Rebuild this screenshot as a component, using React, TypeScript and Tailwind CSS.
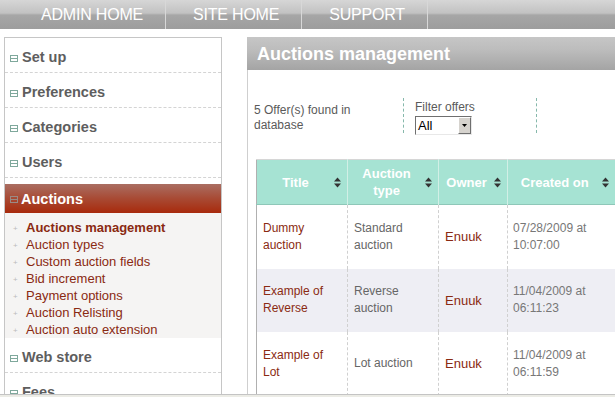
import { ReactNode } from 'react';

const font = { fontFamily: '"Liberation Sans", Arial, sans-serif' };

function MenuIcon(props: { active?: boolean }) {
  const c = props.active ? '#9a8a86' : '#7fa89c';
  return (
    <svg width="8" height="7" viewBox="0 0 8 7" className="shrink-0 mt-[6px]">
      <rect x="0.5" y="0.5" width="7" height="6" fill="none" stroke={c} />
      <line x1="0.5" y1="3.5" x2="7.5" y2="3.5" stroke={c} />
    </svg>
  );
}

function SortIcon() {
  return (
    <svg width="7" height="11" viewBox="0 0 7 11" className="shrink-0">
      <path d="M0 4.5 L3.5 0.5 L7 4.5 Z" fill="#333" />
      <path d="M0 6.5 L3.5 10.5 L7 6.5 Z" fill="#333" />
    </svg>
  );
}

function MenuItem(props: { label: string }) {
  return (
    <div className="h-[35px] border-b border-dashed border-[#d4d4d4] flex items-start gap-[4px] pl-[5px] pt-[11px]">
      <MenuIcon />
      <span className="text-[14.5px] leading-[18px] font-bold text-[#5e5e5e] -mt-[1px]">{props.label}</span>
    </div>
  );
}

const subItems = [
  'Auctions management',
  'Auction types',
  'Custom auction fields',
  'Bid increment',
  'Payment options',
  'Auction Relisting',
  'Auction auto extension',
];

function Th(props: { children: ReactNode; w: string }) {
  return (
    <th className={`${props.w} h-[45px] p-0 border-r border-[#d2efe6] last:border-r-0`}>
      <div className="flex items-center pr-[6px]">
        <div className="flex-1 text-center text-white font-bold text-[13px] leading-[17px]">{props.children}</div>
        <SortIcon />
      </div>
    </th>
  );
}

const rows = [
  { title: ['Dummy', 'auction'], type: ['Standard', 'auction'], date: ['07/28/2009 at', '10:07:00'], bg: 'bg-white', h: 'h-[64px]' },
  { title: ['Example of', 'Reverse'], type: ['Reverse', 'auction'], date: ['11/04/2009 at', '06:11:23'], bg: 'bg-[#eeeef4]', h: 'h-[63px]' },
  { title: ['Example of', 'Lot'], type: ['Lot auction'], date: ['11/04/2009 at', '06:11:59'], bg: 'bg-white', h: 'h-[64px]' },
];

function Lines(props: { lines: string[] }) {
  return (
    <>
      {props.lines.map((l, i) => (
        <div key={i}>{l}</div>
      ))}
    </>
  );
}

export default function App() {
  return (
    <div className="w-[615px] h-[397px] overflow-hidden bg-white relative" style={font}>
      {/* top nav */}
      <div className="h-[29px] flex bg-[linear-gradient(to_bottom,#d6d6d6_0%,#c2c2c2_45%,#a6a6a6_52%,#9d9d9d_100%)] pl-[14px]">
        {['ADMIN HOME', 'SITE HOME', 'SUPPORT'].map((t) => (
          <div key={t} className="h-full flex items-center pl-[27px] pr-[22px] border-r border-[#d8d8d8] text-white text-[16px] tracking-[-0.2px]">
            {t}
          </div>
        ))}
      </div>

      <div className="flex mt-[8px]">
        {/* sidebar */}
        <div className="ml-[4px] w-[218px] h-[400px] border border-b-0 border-[#c6c6c6] shrink-0">
          <MenuItem label="Set up" />
          <MenuItem label="Preferences" />
          <MenuItem label="Categories" />
          <MenuItem label="Users" />
          <div className="mt-[6px] h-[29px] bg-[linear-gradient(to_bottom,#aa6e62_0%,#a84a34_50%,#a82a0c_100%)] flex items-start gap-[3px] pl-[5px] pt-[6px]">
            <MenuIcon active />
            <span className="text-[14.5px] leading-[18px] font-bold text-white">Auctions</span>
          </div>
          <div className="bg-[#f5f4f3] pt-[6px]">
            {subItems.map((s, i) => (
              <div key={s} className="h-[17px] flex items-center pl-[8px]">
                <span className="w-[9px] text-[#bbb] text-[8px] leading-none mt-[3px]">+</span>
                <span className={`ml-[4px] text-[13px] leading-[17px] text-[#8a2a12] ${i === 0 ? 'font-bold' : ''}`}>{s}</span>
              </div>
            ))}
          </div>
          <MenuItem label="Web store" />
          <MenuItem label="Fees" />
        </div>

        {/* content */}
        <div className="ml-[25px] flex-1 min-w-0">
          <div className="h-[33px] bg-[linear-gradient(to_bottom,#c6c6c6_0%,#bcbcbc_40%,#a4a4a4_100%)] flex items-center pl-[10px]">
            <span className="text-white font-bold text-[18px] leading-none">Auctions management</span>
          </div>
          <div className="border-l border-[#cfcfcf] h-[330px]">
            <div className="flex pt-[28px] h-[89px]">
              <div className="w-[155px] pl-[6px] text-[12px] leading-[15px] text-[#5a5a5a] pt-[5px]">
                5 Offer(s) found in
                <br />
                database
              </div>
              <div className="w-[134px] h-[35px] border-l border-r border-dashed border-[#86b8ab] pl-[11px] text-[12px] leading-[15px] text-[#5a5a5a] pt-[2px]">
                Filter offers
                <div className="mt-[1px] w-[57px] h-[19px] flex bg-white border border-t-[#6f6f6f] border-l-[#6f6f6f] border-r-[#e8e8e8] border-b-[#e8e8e8]">
                  <div className="flex-1 text-[13px] leading-[17px] text-black pl-[2px]">All</div>
                  <div className="w-[13px] h-[17px] bg-[#d6d3ce] border border-t-white border-l-white border-r-[#6f6f6f] border-b-[#6f6f6f] flex items-center justify-center">
                    <svg width="5" height="3" viewBox="0 0 5 3">
                      <path d="M0 0 L5 0 L2.5 3 Z" fill="#000" />
                    </svg>
                  </div>
                </div>
              </div>
            </div>

            <table className="ml-[8px] border-collapse table-fixed w-[358px] border-l border-[#b0b0b0]">
              <thead>
                <tr className="bg-[#a6e3d3] border-t border-[#d6d6d6] border-b border-b-[#8ec7b8]">
                  <Th w="w-[91px]">Title</Th>
                  <Th w="w-[91px]">
                    Auction
                    <br />
                    type
                  </Th>
                  <Th w="w-[69px]">Owner</Th>
                  <Th w="w-[107px]">Created on</Th>
                </tr>
              </thead>
              <tbody>
                {rows.map((r, i) => (
                  <tr key={i} className={`${r.bg} ${r.h}`}>
                    <td className="px-[6px] align-middle text-[12px] leading-[17px] text-[#8a2a12] border-r border-dashed border-[#d0d0d0]">
                      <Lines lines={r.title} />
                    </td>
                    <td className="px-[6px] align-middle text-[12px] leading-[17px] text-[#666] border-r border-dashed border-[#d0d0d0]">
                      <Lines lines={r.type} />
                    </td>
                    <td className="px-[6px] align-middle text-[13px] leading-[17px] text-[#8a2a12] border-r border-dashed border-[#d0d0d0]">
                      Enuuk
                    </td>
                    <td className="px-[5px] align-middle text-[12px] leading-[17px] text-[#777]">
                      <Lines lines={r.date} />
                    </td>
                  </tr>
                ))}
              </tbody>
            </table>
          </div>
        </div>
      </div>

      {/* bottom status strip */}
      <div className="absolute left-0 bottom-0 w-full h-[3px] bg-[#ecece6] border-t border-[#c4c4c4]" />
    </div>
  );
}
